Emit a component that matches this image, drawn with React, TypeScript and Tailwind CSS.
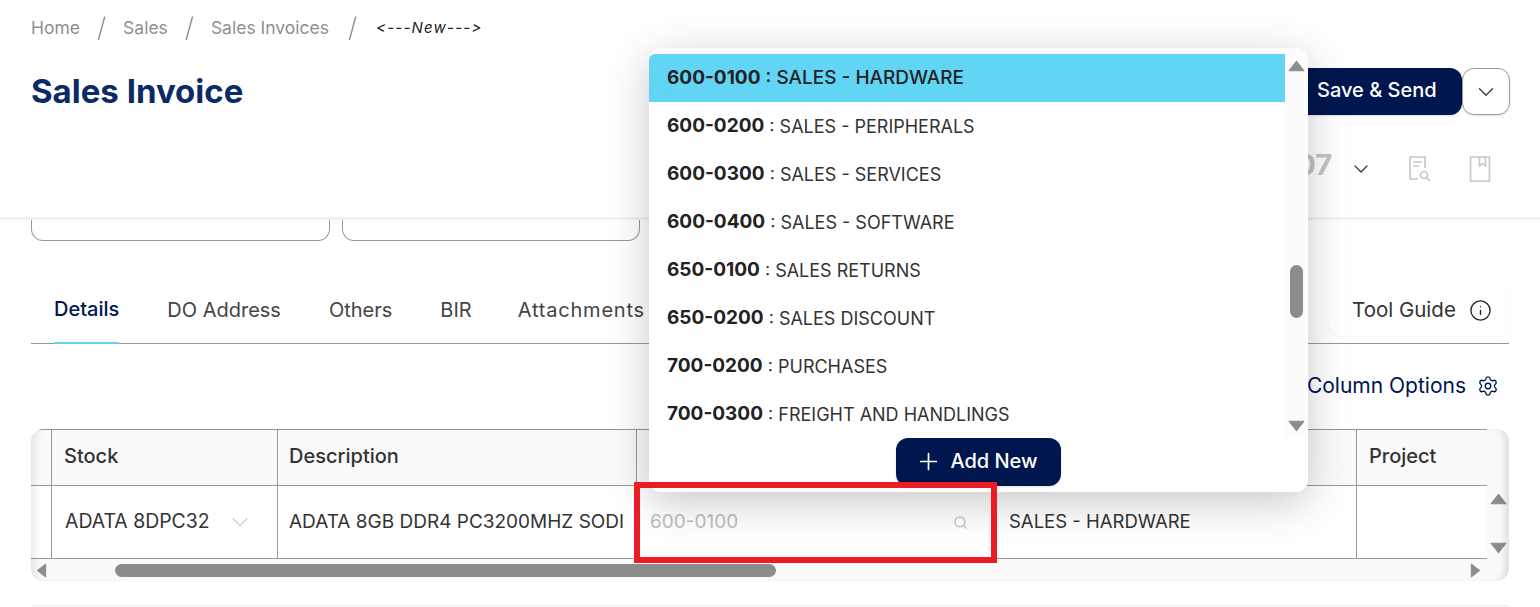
import React from 'react';
import { ChevronDown, Info, Plus, Search, Settings } from 'lucide-react';

const accounts = [
  { code: '600-0200', name: 'SALES - PERIPHERALS' },
  { code: '600-0300', name: 'SALES - SERVICES' },
  { code: '600-0400', name: 'SALES - SOFTWARE' },
  { code: '650-0100', name: 'SALES RETURNS' },
  { code: '650-0200', name: 'SALES DISCOUNT' },
  { code: '700-0200', name: 'PURCHASES' },
  { code: '700-0300', name: 'FREIGHT AND HANDLINGS' },
];

const tabs = ['DO Address', 'Others', 'BIR'];

const Triangle = ({ dir, className }: { dir: 'up' | 'down' | 'left' | 'right'; className?: string }) => {
  const points = {
    up: '8,1 15,10 1,10',
    down: '1,1 15,1 8,10',
    left: '10,1 10,15 1,8',
    right: '1,1 1,15 10,8',
  }[dir];
  const box = dir === 'up' || dir === 'down' ? '0 0 16 11' : '0 0 11 16';
  return (
    <svg viewBox={box} className={className} fill="#8c8c8c" stroke="#8c8c8c" strokeLinejoin="round">
      <polygon points={points} />
    </svg>
  );
};

const App = () => {
  return (
    <div className="relative w-[1540px] h-[607px] overflow-hidden bg-white font-['Inter','Liberation_Sans',sans-serif] text-[#333]">
      {/* Header */}
      <header className="h-[220px] border-b-[3px] border-[#f2f2f2] px-[30px] flex flex-col">
        <nav className="h-[54px] pl-px pt-[2px] flex items-center text-[17.5px] text-[#8f8f8f]">
          <span>Home</span>
          <span className="mx-[17px] text-[27px] font-extralight text-[#777]">/</span>
          <span>Sales</span>
          <span className="mx-[17px] text-[27px] font-extralight text-[#777]">/</span>
          <span>Sales Invoices</span>
          <span className="mx-[19px] text-[27px] font-extralight text-[#777]">/</span>
          <span className="text-[15px] italic tracking-[1.2px] text-[#222] [font-feature-settings:'calt'_0]">&lt;---New---&gt;</span>
        </nav>
        <div className="flex justify-between items-start">
          <h1 className="mt-[17px] ml-px text-[33px] leading-[40px] font-bold text-[#0b2b66]">Sales Invoice</h1>
          <div className="mt-[14px] flex flex-col items-end">
            <div className="flex">
              <button className="w-[172px] h-[47px] pl-[27px] pb-[4px] text-left rounded-xl bg-[#00164f] text-white text-[20px] font-medium shadow">
                Save &amp; Send
              </button>
              <button className="w-[48px] h-[47px] rounded-xl border border-[#999] flex items-center justify-center shadow-sm">
                <ChevronDown className="w-[26px] h-[26px] text-[#333]" strokeWidth={1.1} />
              </button>
            </div>
            <div className="mt-[35px] mr-[19px] h-[38px] flex items-center">
              <span className="text-[29px] font-bold text-[#c4c4c4] -mt-[9px]">07</span>
              <ChevronDown className="ml-[17px] w-[24px] h-[24px] text-[#333]" strokeWidth={1.2} />
              <svg viewBox="0 0 24 26" className="ml-[35px] w-[24px] h-[26px]" fill="none" stroke="#c6c6c6" strokeWidth="1.6">
                <path d="M16 1H2v22h8M16 1h1v11" />
                <path d="M5 6h9M5 10h6" />
                <circle cx="16" cy="19" r="3.5" />
                <path d="M19 22l3 3" />
              </svg>
              <svg viewBox="0 0 22 26" className="ml-[37px] w-[22px] h-[26px]" fill="none" stroke="#c6c6c6" strokeWidth="1.6">
                <path d="M1.5 1h19v24h-19z" />
                <path d="M10.5 1v9l3-2.5 3 2.5V1" />
              </svg>
            </div>
          </div>
        </div>
      </header>

      {/* Form cards cut off by sticky header */}
      <div className="mx-[31px] flex gap-[12px]">
        <div className="w-[299px] h-[21px] rounded-b-xl border border-t-0 border-[#999]" />
        <div className="w-[298px] h-[21px] rounded-b-xl border border-t-0 border-[#999]" />
      </div>

      {/* Tabs */}
      <div className="mx-[31px] mt-[43px] h-[60px] border-b border-[#999] flex justify-between text-[20px]">
        <div className="flex h-[60px] items-stretch gap-[48px] pl-[23px]">
          <div className="h-[60px] pb-[8px] flex items-center font-medium text-[#00164f] border-b-2 border-[#5fd4f4]">Details</div>
          {tabs.map((t) => (
            <div key={t} className="pb-[8px] flex items-center text-[#444]">{t}</div>
          ))}
          <div className="pb-[8px] -ml-[2px] flex items-center text-[#444] tracking-[0.8px]">Attachments</div>
        </div>
        <div className="w-[180px] h-[52px] rounded-b-xl shadow-[0_1px_3px_rgba(0,0,0,0.05)] flex items-center gap-[13px] pl-[23px] text-[20.5px]">
          <span className="text-[#333]">Tool Guide</span>
          <Info className="w-[23px] h-[23px] text-[#222]" strokeWidth={1.4} />
        </div>
      </div>

      {/* Column options */}
      <div className="mx-[31px] h-[85px] pt-[27px] pr-[10px] flex justify-end gap-[11px] text-[21px] text-[#00164f]">
        <span className="leading-[30px]">Column Options</span>
        <Settings className="w-[22px] h-[22px] mt-[4px]" strokeWidth={1.5} />
      </div>

      {/* Table */}
      <div className="relative mx-[31px] h-[152px] rounded-xl bg-[#fafafa] overflow-hidden grid grid-cols-[20px_226px_359px_354px_366px_131px_23px] grid-rows-[57px_73px_22px] text-[19px]">
        <div className="border-y border-[#999]" />
        <div className="border border-r-0 border-[#999] pl-[12px] pb-[3px] flex items-center text-[20px] font-medium">Stock</div>
        <div className="border border-r-0 border-[#999] pl-[11px] pb-[3px] flex items-center text-[20px] font-medium">Description</div>
        <div className="border border-r-0 border-[#999]" />
        <div className="border border-r-0 border-[#999]" />
        <div className="border border-r-0 border-[#999] pl-[12px] pb-[3px] flex items-center text-[20px] font-medium">Project</div>
        <div />

        <div className="bg-white border-b border-[#999]" />
        <div className="bg-white border-l border-b border-[#999] pl-[13px] pr-[30px] flex items-center justify-between">
          <span className="text-[19.4px]">ADATA 8DPC32</span>
          <ChevronDown className="w-[28px] h-[28px] -mr-[7px] text-[#bbb]" strokeWidth={0.9} />
        </div>
        <div className="bg-white border-l border-b border-[#999] pl-[11px] flex items-center whitespace-nowrap">
          ADATA 8GB DDR4 PC3200MHZ SODI
        </div>
        <div className="bg-white border-l border-b border-[#999] pl-[13px] pr-[22px] flex items-center justify-between text-[#bdbdbd]">
          <span>600-0100</span>
          <Search className="w-[15px] h-[15px]" strokeWidth={2} />
        </div>
        <div className="bg-white border-b border-[#999] pl-[19px] flex items-center text-[18.5px]">SALES - HARDWARE</div>
        <div className="bg-white border-l border-b border-[#999]" />
        <div className="flex flex-col items-center pt-[7px] gap-[37px]">
          <Triangle dir="up" className="w-[17px] h-[12px]" />
          <Triangle dir="down" className="w-[17px] h-[12px]" />
        </div>

        {/* Horizontal scrollbar */}
        <div className="col-span-6 relative flex items-center justify-between px-[5px]">
          <Triangle dir="left" className="w-[11px] h-[15px]" />
          <div className="absolute left-[84px] top-[5px] w-[661px] h-[13px] rounded-full bg-[#8c8c8c]" />
          <Triangle dir="right" className="w-[11px] h-[15px] mr-px" />
        </div>
        <div />

        {/* Edge fade over the scroller */}
        <div className="pointer-events-none absolute inset-0 rounded-xl shadow-[inset_9px_0_8px_-6px_rgba(0,0,0,0.1),inset_-9px_0_8px_-6px_rgba(0,0,0,0.14)]" />
      </div>

      <div className="mx-[31px] mt-[24px] border-t border-[#eee]" />

      {/* Account dropdown */}
      <div className="absolute left-[649px] top-[48px] w-[659px] h-[444px] rounded-xl bg-white shadow-[0_10px_40px_rgba(0,0,0,0.22)]">
        <div className="flex h-[390px]">
          <ul className="flex-1 pt-[6px] text-[18px] text-[#333]">
            <li className="h-[48px] pl-[18px] pt-[1px] flex items-center bg-[#62d5f5] text-[19px] font-medium text-[#222] rounded-tl-md">
              <b className="font-bold">600-0100</b>&nbsp;: SALES - HARDWARE
            </li>
            {accounts.map((a) => (
              <li key={a.code} className="h-[48px] pl-[18px] pt-[1px] flex items-center">
                <b className="text-[19px] font-bold text-[#222]">{a.code}</b>&nbsp;: {a.name}
              </li>
            ))}
          </ul>
          <div className="w-[23px] relative bg-[#fcfcfc] rounded-tr-xl">
            <Triangle dir="up" className="absolute left-[3px] top-[12px] w-[17px] h-[12px]" />
            <div className="absolute left-[5px] top-[217px] w-[13px] h-[53px] rounded-full bg-[#8c8c8c]" />
            <Triangle dir="down" className="absolute left-[3px] top-[372px] w-[17px] h-[12px]" />
          </div>
        </div>
        <button className="ml-[247px] w-[165px] h-[48px] pb-[2px] rounded-xl bg-[#00164f] text-white text-[20px] font-medium flex items-center justify-center gap-[8px] shadow">
          <Plus className="w-[27px] h-[27px] -ml-[4px]" strokeWidth={1.5} />
          Add New
        </button>
      </div>

      {/* Red highlight annotation */}
      <div className="absolute left-[634px] top-[482px] w-[363px] h-[81px] border-[6px] border-[#ed1c24]" />
    </div>
  );
};

export default App;
